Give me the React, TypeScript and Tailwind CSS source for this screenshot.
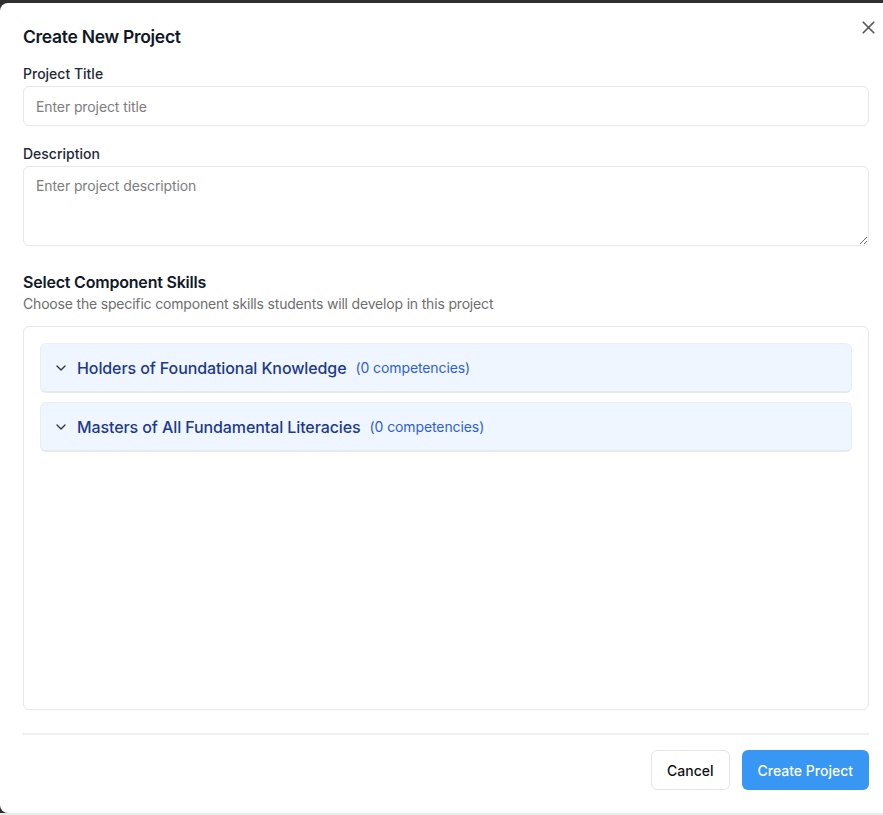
import React from 'react';
import { X, ChevronDown } from 'lucide-react';

const groups = [
  { name: 'Holders of Foundational Knowledge', count: 0 },
  { name: 'Masters of All Fundamental Literacies', count: 0 },
];

export default function App() {
  return (
    <div className="w-[883px] h-[815px] bg-[#2f2f2f] pt-[3px] overflow-hidden" style={{ fontFamily: 'Inter, "Noto Sans", sans-serif' }}>
      <div className="relative h-[810px] bg-white rounded-tl-lg rounded-bl-lg pl-[23px] pr-[14px] pt-[21px]">
        <button className="absolute right-[4px] top-[14px] text-[#555]">
          <X size={21} strokeWidth={1.9} />
        </button>
        <h2 className="text-[17.5px] leading-[26px] font-semibold tracking-[-0.3px] text-[#111827]">Create New Project</h2>

        <div className="mt-[14px]">
          <label className="block text-[14px] leading-[20px] font-medium text-[#1f2937]">Project Title</label>
          <input
            className="mt-[2px] w-full h-[40px] rounded-md border border-[#e8e8e8] px-[12px] text-[14px] tracking-[-0.1px] placeholder:text-[#7d7d7d] outline-none"
            placeholder="Enter project title"
          />
        </div>

        <div className="mt-[18px]">
          <label className="block text-[14px] leading-[20px] font-medium text-[#1f2937]">Description</label>
          <textarea
            className="mt-[2px] block w-full h-[80px] rounded-md border border-[#e8e8e8] px-[12px] py-[8px] text-[14px] tracking-[-0.1px] placeholder:text-[#7d7d7d] outline-none"
            placeholder="Enter project description"
          />
        </div>

        <div className="mt-[24px]">
          <h3 className="text-[16px] leading-[24px] font-semibold tracking-[-0.2px] text-[#111827]">Select Component Skills</h3>
          <p className="text-[14px] leading-[20px] tracking-[-0.18px] text-[#6e6e6e]">Choose the specific component skills students will develop in this project</p>
          <div className="mt-[12px] h-[384px] rounded-md border border-[#e8e8e8] p-[16px] flex flex-col gap-[9px]">
            {groups.map((g) => (
              <div key={g.name} className="h-[50px] rounded-md bg-[#eff6ff] border border-[#e9eef5] border-b-[2px] border-b-[#e6eaf0] flex items-center px-[12px]">
                <ChevronDown size={16} strokeWidth={2} className="text-[#2d3748]" />
                <span className="ml-[8px] text-[16px] font-medium tracking-[-0.1px] text-[#1e3a8a]">{g.name}</span>
                <span className="ml-[9px] text-[14px] tracking-[-0.1px] text-[#2f5fd0]">({g.count} competencies)</span>
              </div>
            ))}
          </div>
        </div>

        <div className="mt-[23px] border-t-2 border-[#f0f0f0] pt-[15px] flex justify-end gap-[12px]">
          <button className="h-[40px] px-[15px] rounded-md border border-[#e5e5e5] bg-white text-[14px] font-medium text-[#111]">Cancel</button>
          <button className="h-[40px] px-[16px] rounded-md bg-[#3797f2] text-[14px] font-medium text-white">Create Project</button>
        </div>
      </div>
      <div className="h-[2px] bg-[#ececec]" />
    </div>
  );
}
